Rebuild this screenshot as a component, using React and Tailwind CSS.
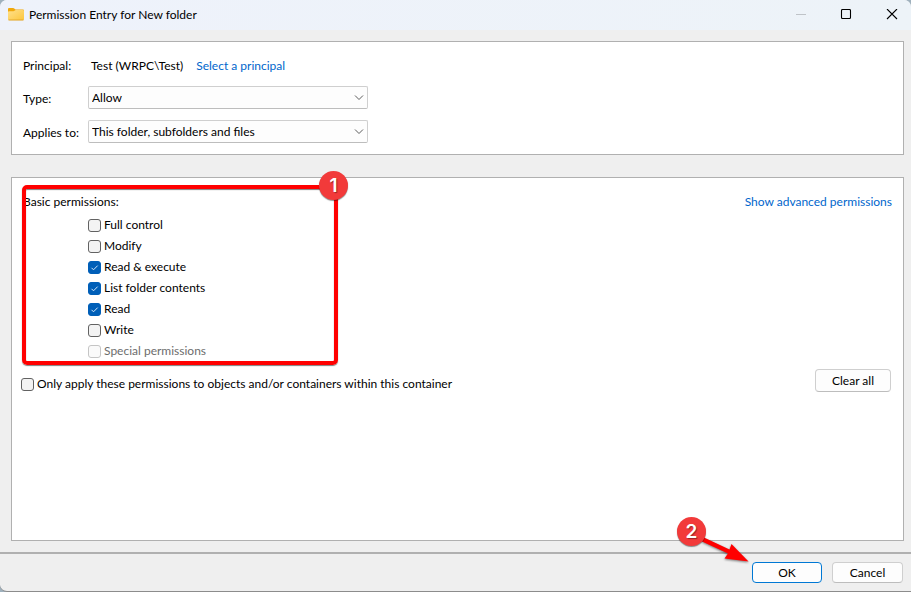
import React from "react";

const permissions = [
  { id: "full-control", label: "Full control", checked: false },
  { id: "modify", label: "Modify", checked: false },
  { id: "read-execute", label: "Read & execute", checked: true },
  { id: "list-folder", label: "List folder contents", checked: true },
  { id: "read", label: "Read", checked: true },
  { id: "write", label: "Write", checked: false },
  { id: "special", label: "Special permissions", checked: false, disabled: true },
];

function FolderIcon() {
  return (
    <svg className="h-4 w-4" viewBox="0 0 16 16" aria-hidden="true">
      <defs>
        <linearGradient id="folder-front" x1="0" y1="0" x2="1" y2="1">
          <stop offset="0" stopColor="#ffe08c" />
          <stop offset="1" stopColor="#fcc63c" />
        </linearGradient>
      </defs>
      <path d="M0 11V2a1 1 0 0 1 1-1h4.200a1.500 1.500 0 0 1 1 .4L7.600 2.500H15a1 1 0 0 1 1 1v8Z" fill="#f0a80c" />
      <path d="M0 5.200a1 1 0 0 1 1-1h4.500a1.500 1.500 0 0 0 1-.4l.6-.5a1.500 1.500 0 0 1 1-.4H15a1 1 0 0 1 1 1v8.200a1.200 1.200 0 0 1-1.200 1.200H1.200A1.200 1.200 0 0 1 0 12.100Z" fill="url(#folder-front)" />
      <path d="M.5 13h15" stroke="#dda025" strokeWidth=".8" />
    </svg>
  );
}

function CheckOption({ id, label, checked, disabled }) {
  return (
    <div className="flex h-[21px] items-center gap-[3px]">
      <span className="relative flex h-[13px] w-[13px]">
        <input
          type="checkbox"
          id={id}
          defaultChecked={checked}
          disabled={disabled}
          className="peer h-[13px] w-[13px] appearance-none rounded-[3px] border border-[#626262] bg-[#f3f3f3] checked:border-[#005fb8] checked:bg-[#005fb8] disabled:border-[#c5c5c5] disabled:bg-[#fafafa]"
        />
        <svg
          className="pointer-events-none absolute inset-0 hidden h-[13px] w-[13px] peer-checked:block"
          viewBox="0 0 13 13"
          fill="none"
          aria-hidden="true"
        >
          <path d="M3.500 6.800 5.500 8.800 9.700 4.600" stroke="#d5e8fa" strokeWidth="1" />
        </svg>
      </span>
      <label htmlFor={id} className={disabled ? "pb-[2px] text-[#6d6d6d]" : "pb-[2px]"}>
        {label}
      </label>
    </div>
  );
}

function SelectRow({ id, label, value }) {
  return (
    <div className="flex h-[34px] items-center">
      <label htmlFor={id} className="w-[65px] shrink-0 pt-[3px]">
        {label}
      </label>
      <span className="relative flex w-[280px]">
        <select
          id={id}
          className="h-[23px] w-full appearance-none rounded-[2px] border border-[#cfcfcf] border-b-[#bdbdbd] bg-[#fdfdfd] pt-[2px] pr-5 pl-[3px]"
        >
          <option>{value}</option>
        </select>
        <svg
          className="pointer-events-none absolute top-2 right-1 h-[7px] w-[10px]"
          viewBox="0 0 10 7"
          fill="none"
          aria-hidden="true"
        >
          <path d="M1 1.500 5 5.500 9 1.500" stroke="#5c5c5c" strokeWidth="1" />
        </svg>
      </span>
    </div>
  );
}

function StepBadge({ children, className }) {
  return (
    <span
      className={
        "absolute flex h-[29px] w-[29px] items-center justify-center rounded-full bg-[#f23a3a] font-['Inter','Liberation_Sans',sans-serif] text-[19px] leading-none font-semibold text-white shadow-[0_1px_1px_#00000070] [text-shadow:1px_1px_1px_#00000060] " +
        className
      }
    >
      {children}
    </span>
  );
}

export default function App() {
  return (
    <div className="bg-[#9fb1bd]">
      <div className="flex min-h-screen flex-col overflow-hidden rounded-t-[7px] rounded-bl-[7px] border-b border-[#8c8c8c] bg-[#efefef] font-['Lato','Open_Sans',sans-serif] text-[12px] leading-4 text-black">
        <header className="flex h-[30px] items-center bg-gradient-to-r from-[#eef2fb] to-[#edf3f8] pl-2">
          <FolderIcon />
          <h1 className="ml-[5px] flex-1">Permission Entry for New folder</h1>
          <button type="button" aria-label="Minimize" disabled className="flex h-7 w-[45px] items-center justify-center">
            <svg className="h-3 w-3" viewBox="0 0 12 12" fill="none">
              <path d="M1 5.500h10" stroke="#bfc3c8" />
            </svg>
          </button>
          <button type="button" aria-label="Maximize" className="flex h-7 w-[46px] items-center justify-center">
            <svg className="h-3 w-3" viewBox="0 0 12 12" fill="none">
              <rect x="1.500" y=".5" width="9" height="9" rx="1" stroke="#000" strokeWidth="1.100" />
            </svg>
          </button>
          <button type="button" aria-label="Close" className="mr-[-4px] flex h-7 w-[46px] items-center justify-center">
            <svg className="h-3 w-3" viewBox="0 0 12 12" fill="none">
              <path d="M1 0 11 10M11 0 1 10" stroke="#000" strokeWidth="1.100" />
            </svg>
          </button>
        </header>

        <main className="flex flex-1 flex-col gap-[22px] pt-[11px] pr-[7px] pb-[11px] pl-[11px]">
          <section className="border border-[#b0b0b0] bg-white pt-2 pb-[6px] pl-[11px]">
            <div className="flex h-[30px] items-center pt-[2px]">
              <span className="w-[68px]">Principal:</span>
              <span>Test (WRPC\Test)</span>
              <a href="#principal" className="ml-[13px] text-[#0066cc]">
                Select a principal
              </a>
            </div>
            <SelectRow id="type" label="Type:" value="Allow" />
            <SelectRow id="applies-to" label="Applies to:" value="This folder, subfolders and files" />
          </section>

          <section className="relative flex-1 border border-[#b0b0b0] bg-white pt-4 pr-[11px] pb-4 pl-[9px]">
            <div className="flex justify-between">
              <h2 className="pl-[2px]">Basic permissions:</h2>
              <a href="#advanced" className="text-[#0066cc]">
                Show advanced permissions
              </a>
            </div>
            <div className="mt-[5px] pl-[67px]">
              {permissions.map((item) => (
                <CheckOption key={item.id} {...item} />
              ))}
            </div>
            <div className="mt-[7px] flex items-start justify-between">
              <div className="pt-[5px]">
                <CheckOption
                  id="only-apply"
                  label="Only apply these permissions to objects and/or containers within this container"
                />
              </div>
              <button
                type="button"
                className="mr-px h-[23px] w-[76px] rounded-[4px] border border-[#cfcfcf] border-b-[#bdbdbd] bg-[#fdfdfd]"
              >
                Clear all
              </button>
            </div>

            <div className="pointer-events-none absolute top-[7px] left-[10px] h-[180px] w-[316px] rounded-[5px] border-4 border-[#ff0000] shadow-[0_1px_1px_#00000080,inset_0_1px_1px_#00000080]">
              <StepBadge className="-top-[18px] -right-[14px]">1</StepBadge>
            </div>
          </section>
        </main>

        <footer className="flex justify-end gap-[10px] border-t-2 border-[#b0b0b0] pt-2 pr-2 pb-2">
          <div className="relative flex">
            <button type="button" className="h-[21px] w-[70px] rounded-[4px] border border-[#0078d4] bg-[#fdfdfd]">
              OK
            </button>
            <svg
              className="pointer-events-none absolute -top-[26px] right-[70px] h-[30px] w-[54px] drop-shadow-[0_1px_1px_#00000080]"
              viewBox="0 0 54 30"
              aria-hidden="true"
            >
              <path d="M6 1.500 31.500 13.500 33.500 8 50.500 25.500 26.500 22.500 30 17.500 4 5.500Z" fill="#ff0000" />
            </svg>
            <StepBadge className="-top-[45px] right-[116px]">2</StepBadge>
          </div>
          <button
            type="button"
            className="h-[21px] w-[71px] rounded-[4px] border border-[#cfcfcf] border-b-[#bdbdbd] bg-[#fdfdfd]"
          >
            Cancel
          </button>
        </footer>
      </div>
    </div>
  );
}
